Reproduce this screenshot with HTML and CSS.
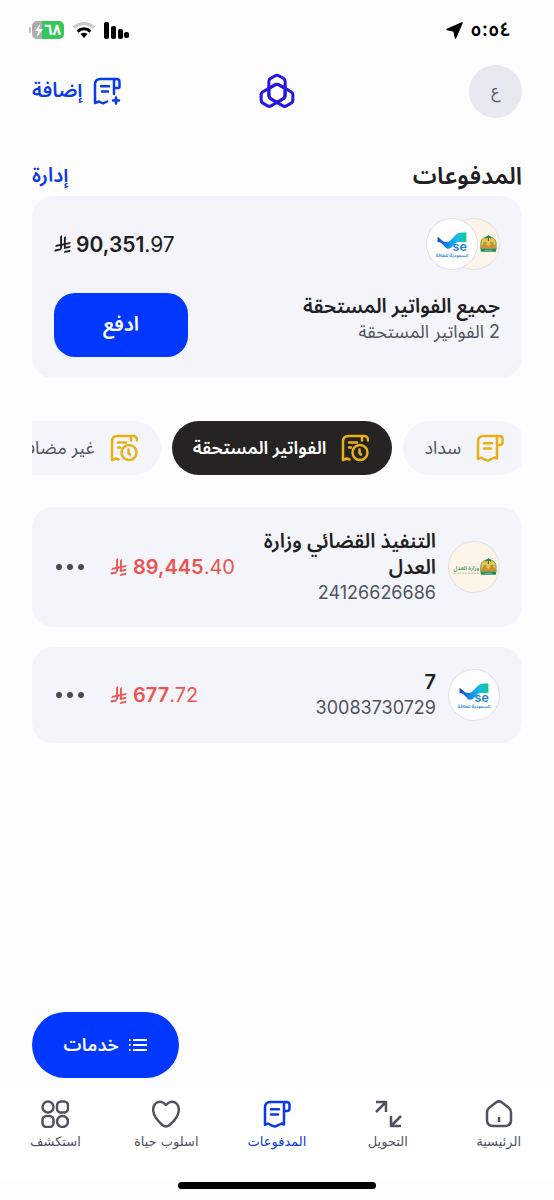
FILE: index.html
```html
<!DOCTYPE html>
<html lang="ar" dir="rtl">
<head>
<meta charset="utf-8">
<meta name="viewport" content="width=device-width, initial-scale=1">
<title>المدفوعات</title>
<link rel="stylesheet" href="styles.css">
</head>
<body>
<svg class="defs" aria-hidden="true">
  <linearGradient id="wave" x1="0" x2="1"><stop offset="0" stop-color="#1546c8"/><stop offset=".4" stop-color="#168ff0"/><stop offset=".7" stop-color="#14bdec"/><stop offset="1" stop-color="#12c58c"/></linearGradient>
  <symbol id="riyal" viewBox="0 0 1124 1257"><path fill="currentColor" d="M699.62,1113.02c-20.06,44.48-33.32,92.75-38.4,143.37l424.51-90.24c20.06-44.47,33.31-92.75,38.4-143.37l-424.51,90.24ZM1085.73,895.8c20.06-44.47,33.32-92.75,38.4-143.37l-330.68,70.33v-135.2l292.27-62.11c20.06-44.47,33.32-92.75,38.4-143.37l-330.68,70.27V66.13c-50.67,28.45-95.67,66.32-132.25,110.99v403.35l-132.25,28.11V0c-50.67,28.44-95.67,66.32-132.25,110.99v525.69l-295.91,62.88c-20.06,44.47-33.33,92.75-38.42,143.37l334.33-71.05v170.26l-358.3,76.14c-20.06,44.47-33.32,92.75-38.4,143.37l375.04-79.7c30.53-6.35,56.77-24.4,73.83-49.24l68.78-101.97c7.14-10.55,11.3-23.27,11.3-36.97v-149.98l132.25-28.11v270.4l424.53-90.28Z"/></symbol>
  <symbol id="bill" viewBox="0 0 28 28"><g fill="none" stroke="currentColor" stroke-width="2.5" stroke-linecap="round" stroke-linejoin="round"><path d="M23.500 2H7.500C4 2 2 4 2 7.500V25l3-1.500L8.500 25.500 12 26.600 15.500 25l3-1.500 2.500 1V4.500C21 3 22 2 23.500 2S26.500 3 26.500 5V8.500C26.500 10.500 25.500 11 24 11H21"/><path d="M8 9.200h8M8 14.500h7"/></g></symbol>
  <symbol id="bill-clock" viewBox="0 0 28 28"><g fill="none" stroke="currentColor" stroke-width="2.5" stroke-linecap="round" stroke-linejoin="round"><path d="M8.500 25.500 6 24.500 2 26V7.500C2 4 4 2 7.500 2H23C25.500 2 27 3.500 27 6.500M21 6.500V3"/><path d="M8 8.500h8M8 13.500h2"/><circle cx="19" cy="18.500" r="7.500"/><path d="M18.500 15.500V19l1.500 1.500"/></g></symbol>
  <symbol id="se" viewBox="0 0 52 52"><path fill="url(#wave)" d="M11 18.500C14 20 16 24 20 24 27 24 28 14 36 14h5v10H32C28 26 26 31 22 31 18 31 17 24 11 24Z"/></symbol>
  <symbol id="moj" viewBox="0 0 52 52">
    <path fill="#f0c24b" stroke="#3c9464" stroke-width=".8" d="M33 31v-5c0-5 3-7 8-8 5 1 8 3 8 8v5Z"/>
    <path d="M41 17v6M38 20l3-2 3 2M36 25h3M43 25h3" stroke="#287c50" stroke-width="1.200" fill="none"/>
    <path d="M33 28l4-3 4 3 4-3 4 3v3H33Z" fill="#c99035"/>
    <path d="M33 31h16v3H33Z" fill="#1e8a58"/><path d="M37 32.500h8" stroke="#bfe0c8" stroke-width=".6"/>
  </symbol>
</svg>
<div class="app">
  <div class="status">
    <div class="status-time"><span>٥:٥٤</span>
      <svg width="17" height="17" viewBox="0 0 17 17"><path d="M16 1 9.500 16 8 9 1 7.500Z" stroke="#000" stroke-width="1.500" stroke-linejoin="round"/></svg>
    </div>
    <div class="status-icons">
      <svg width="26" height="17" viewBox="0 0 26 17"><rect y="0" width="5" height="17" rx="2"/><rect x="7" y="4" width="5" height="13" rx="2"/><rect x="14" y="7" width="5" height="10" rx="2"/><rect x="20" y="10" width="5" height="6" rx="2"/></svg>
      <svg width="22" height="16" viewBox="0 0 22 16" fill="none" stroke-width="3"><path d="M1 5.500Q11-2.500 21 5.500" stroke="#c8c8c8"/><path d="M4.500 9.500Q11 4 17.500 9.500" stroke="#000"/><path d="M7.500 12Q11 9.500 14.500 12L11 16Z" fill="#000"/></svg>
      <div class="battery"><div class="battery-body"><svg width="8" height="13" viewBox="0 0 8 13"><path d="M5 0 0 7h3L2 13 8 5H4Z" fill="#fff"/></svg><span>٦٨</span></div><i class="battery-tip"></i></div>
    </div>
  </div>

  <header class="topbar">
    <button class="avatar" aria-label="الحساب">ع</button>
    <svg class="brand" width="38" height="36" viewBox="58 220 108 106" role="img" aria-label="الراجحي"><g fill="none" stroke="#2718df" stroke-width="9" stroke-linejoin="round"><path id="leaf" d="M107 228Q112 225 117 228L131 236Q136 239 136 245V287Q136 292 131 295L112 307 93 295Q88 292 88 287V245Q88 239 93 236Z"/><use href="#leaf" transform="rotate(120 112 279)"/><use href="#leaf" transform="rotate(240 112 279)"/></g></svg>
    <button class="add">
      <svg width="28" height="28" viewBox="0 0 28 28" fill="none" stroke="currentColor" stroke-width="2.500" stroke-linecap="round" stroke-linejoin="round"><path d="M21 17V4.500C21 3 22 2 23.500 2S26.500 3 26.500 5V9.500C26.500 10.500 26 11 25 11H21M23.500 2H7.500C4 2 2 4 2 7.500V26l4-1.500L10 26.500 14 24.500M8 9.200h8M9 14.500h6M23 20.500v6M20 23.500h6"/></svg>
      إضافة
    </button>
  </header>

  <main class="content">
    <div class="heading"><h1>المدفوعات</h1><a href="#manage">إدارة</a></div>

    <section class="card summary">
      <div class="summary-top">
        <div class="logos"><svg class="logo moj"><use href="#moj"/></svg><svg class="logo" viewBox="0 0 52 52"><use href="#se"/><text class="se-name" x="34" y="33">se</text><text class="se-sub" x="26" y="39">السعودية للطاقة</text></svg></div>
        <div class="amount total" dir="ltr"><svg class="riyal"><use href="#riyal"/></svg><span><b>90,351</b>.97</span></div>
      </div>
      <div class="summary-bottom">
        <div><h2>جميع الفواتير المستحقة</h2><p class="summary-note">2 الفواتير المستحقة</p></div>
        <button class="pay">ادفع</button>
      </div>
    </section>

    <div class="chips"><div class="chips-track">
      <button class="chip"><svg><use href="#bill"/></svg>سداد</button>
      <button class="chip active"><svg><use href="#bill-clock"/></svg>الفواتير المستحقة</button>
      <button class="chip"><svg><use href="#bill-clock"/></svg>غير مضافة</button>
    </div></div>

    <ul class="bills">
      <li class="card bill">
        <svg class="logo moj" viewBox="0 0 52 52"><use href="#moj"/><text class="moj-name" x="18" y="29">وزارة العدل</text><path d="M5 32.500h26" stroke="#c9ba83" stroke-dasharray="2 1"/></svg>
        <div class="bill-text"><h2>التنفيذ القضائي وزارة العدل</h2><p>24126626686</p></div>
        <div class="amount due" dir="ltr"><svg class="riyal"><use href="#riyal"/></svg><span><b>89,445</b>.40</span></div>
        <button class="more" aria-label="المزيد"><i></i><i></i><i></i></button>
      </li>
      <li class="card bill">
        <svg class="logo" viewBox="0 0 52 52"><use href="#se"/><text class="se-name" x="34" y="33">se</text><text class="se-sub" x="26" y="39">السعودية للطاقة</text></svg>
        <div class="bill-text"><h2>7</h2><p>30083730729</p></div>
        <div class="amount due" dir="ltr"><svg class="riyal"><use href="#riyal"/></svg><span><b>677</b>.72</span></div>
        <button class="more" aria-label="المزيد"><i></i><i></i><i></i></button>
      </li>
    </ul>

    <button class="services"><svg width="18" height="12" viewBox="0 0 18 12" stroke="#fff" stroke-width="2"><path d="M4 1h14M4 6h14M4 11h14M0 1h1.600M0 6h1.600M0 11h1.600"/></svg>خدمات</button>
  </main>

  <nav class="tabs">
    <a href="#home"><svg viewBox="0 0 28 28"><path d="M2 12.500C2 10 2.500 9 4.500 7.500L11 2.500C13 1 15 1 17 2.500L23.500 7.500C25.500 9 26 10 26 12.500V20C26 24 24 26 20 26H8C4 26 2 24 2 20ZM14 17v5"/></svg>الرئيسية</a>
    <a href="#transfer"><svg viewBox="0 0 28 28"><path d="M2 2H12V12M12 2 2 12M17 16V26H27M17 26 27 16"/></svg>التحويل</a>
    <a href="#payments" class="current" aria-current="page"><svg><use href="#bill"/></svg>المدفوعات</a>
    <a href="#lifestyle"><svg viewBox="0 0 28 28"><path d="M14 5C11 1 6 .5 3 4 0 8 1 14 4 18 7 22 11 26.500 14 26.500S21 22 24 18C27 14 28 8 25 4 22 .5 17 1 14 5Z"/></svg>اسلوب حياة</a>
    <a href="#explore"><svg viewBox="0 0 28 28"><circle cx="7" cy="7" r="5.500"/><rect x="16" y="1.500" width="11" height="11" rx="4"/><rect x="1.500" y="16" width="11" height="11" rx="4"/><circle cx="21.500" cy="21.500" r="5.500"/></svg>استكشف</a>
  </nav>
  <div class="home-bar"></div>
</div>
</body>
</html>
```

FILE: styles.css
```css
* { box-sizing: border-box; }
body {
  margin: 0;
  background: #fdfdfe;
  color: #202022;
  font-family: Inter, "Noto Sans Arabic", "DejaVu Sans", sans-serif;
}
h1, h2, p, ul { margin: 0; padding: 0; }
button {
  border: 0;
  padding: 0;
  background: none;
  color: inherit;
  font: inherit;
}
a { color: inherit; text-decoration: none; }
.defs { position: absolute; width: 0; height: 0; }

.app { display: flex; flex-direction: column; min-height: 100vh; }

.status {
  display: flex;
  align-items: center;
  justify-content: space-between;
  height: 60px;
  padding: 0 43px 0 29px;
}
.status-time, .status-icons { display: flex; align-items: center; }
.status-time { gap: 7px; font-size: 20px; font-weight: 600; color: #000; }
.status-icons { gap: 9px; }
.battery { display: flex; align-items: center; gap: 1px; }
.battery-body {
  display: flex;
  flex-direction: row-reverse;
  align-items: center;
  justify-content: center;
  gap: 1px;
  width: 32px;
  height: 18px;
  border-radius: 5px;
  background: linear-gradient(to left, #34c759 70%, #adadad 70%);
  color: #fff;
  font-size: 15px;
  font-weight: 700;
}
.battery-tip { width: 2px; height: 6px; border-radius: 1px; background: #bdbdbd; }

.topbar {
  display: grid;
  grid-template-columns: 1fr auto 1fr;
  align-items: center;
  height: 62px;
  padding: 0 32px;
}
.avatar {
  width: 53px;
  height: 53px;
  border-radius: 50%;
  background: #e6e9f0;
  color: #55585f;
  font-size: 16px;
}
.add {
  display: flex;
  align-items: center;
  justify-self: end;
  gap: 10px;
  color: #0b3be8;
  font-size: 20px;
  font-weight: 600;
}

.content {
  display: flex;
  flex: 1;
  flex-direction: column;
  padding: 34px 32px 10px;
}
.heading {
  display: flex;
  align-items: center;
  justify-content: space-between;
  height: 40px;
}
h1 { font-size: 24px; font-weight: 600; }
.heading a { color: #0b3be8; font-size: 20px; font-weight: 600; }

.card { border-radius: 21px; background: #f4f5fa; }
.summary { display: flex; flex-direction: column; gap: 23px; padding: 22px 22px 21px; }
.summary-top, .summary-bottom { display: flex; justify-content: space-between; }
.summary-top { align-items: center; }
.logos { display: flex; }
.logos .logo + .logo { margin-right: -30px; }
.logo {
  flex: none;
  width: 52px;
  height: 52px;
  border: 1px solid #dfe1e5;
  border-radius: 50%;
  background: #fff;
}
.logo.moj { background: #fdf6e8; }
.logo text { text-anchor: middle; }
.se-name { direction: ltr; fill: #1b7fe0; font-size: 13px; font-weight: 600; }
.se-sub { fill: #2a85dc; font-size: 5px; font-weight: 600; }
.moj-name { fill: #3c9a6a; font-size: 6px; font-weight: 600; }
.amount { display: flex; align-items: center; gap: 6px; font-size: 20px; }
.amount.total { gap: 5px; font-size: 21px; }
.amount b { font-weight: 600; }
.riyal { width: 17px; height: 18px; }
h2 { font-size: 20px; font-weight: 600; line-height: 26px; }
.summary-note { color: #50535f; font-size: 18px; line-height: 26px; }
.pay {
  width: 134px;
  height: 64px;
  border-radius: 21px;
  background: #0038ff;
  color: #fff;
  font-size: 20px;
  font-weight: 600;
}

.chips { overflow: hidden; margin: 43px 0 32px; }
.chips-track { display: flex; gap: 11px; margin-right: -5px; }
.chip {
  display: flex;
  flex: none;
  align-items: center;
  gap: 15px;
  height: 54px;
  padding: 0 23px 0 21px;
  border-radius: 27px;
  background: #f4f5fa;
  color: #50535f;
  font-size: 18px;
  white-space: nowrap;
}
.chip svg { width: 28px; height: 28px; color: #e8b018; }
.chip.active { background: #252423; color: #fff; font-weight: 600; }

.bills { display: flex; flex-direction: column; gap: 20px; list-style: none; }
.bill { display: flex; align-items: center; min-height: 96px; padding: 21px 22px; }
.bill-text { width: 180px; margin-right: 12px; }
.bill-text p { color: #50535f; font-size: 18px; line-height: 26px; }
.due { flex: 1; margin-right: 20px; color: #ed5350; }
.more { display: flex; gap: 5px; margin-right: 24px; padding: 10px 2px; }
.more i { width: 6px; height: 6px; border-radius: 50%; background: #474b57; }

.services {
  display: flex;
  align-items: center;
  align-self: flex-end;
  justify-content: center;
  gap: 11px;
  width: 147px;
  height: 66px;
  margin-top: auto;
  border-radius: 33px;
  background: #0038ff;
  color: #fff;
  font-size: 18px;
  font-weight: 600;
}

.tabs {
  display: flex;
  justify-content: space-between;
  height: 94px;
  background: #fff;
}
.tabs a {
  display: flex;
  flex: 1;
  flex-direction: column;
  align-items: center;
  gap: 4px;
  padding-top: 12px;
  color: #50535f;
  font-family: "DejaVu Sans", sans-serif;
  font-size: 13px;
  line-height: 20px;
}
.tabs svg {
  width: 28px;
  height: 28px;
  fill: none;
  stroke: currentColor;
  stroke-width: 2.5;
  stroke-linejoin: round;
}
.tabs .current { color: #0b3be8; }
.home-bar {
  align-self: center;
  width: 198px;
  height: 7px;
  margin-bottom: 11px;
  border-radius: 4px;
  background: #000;
}
```
